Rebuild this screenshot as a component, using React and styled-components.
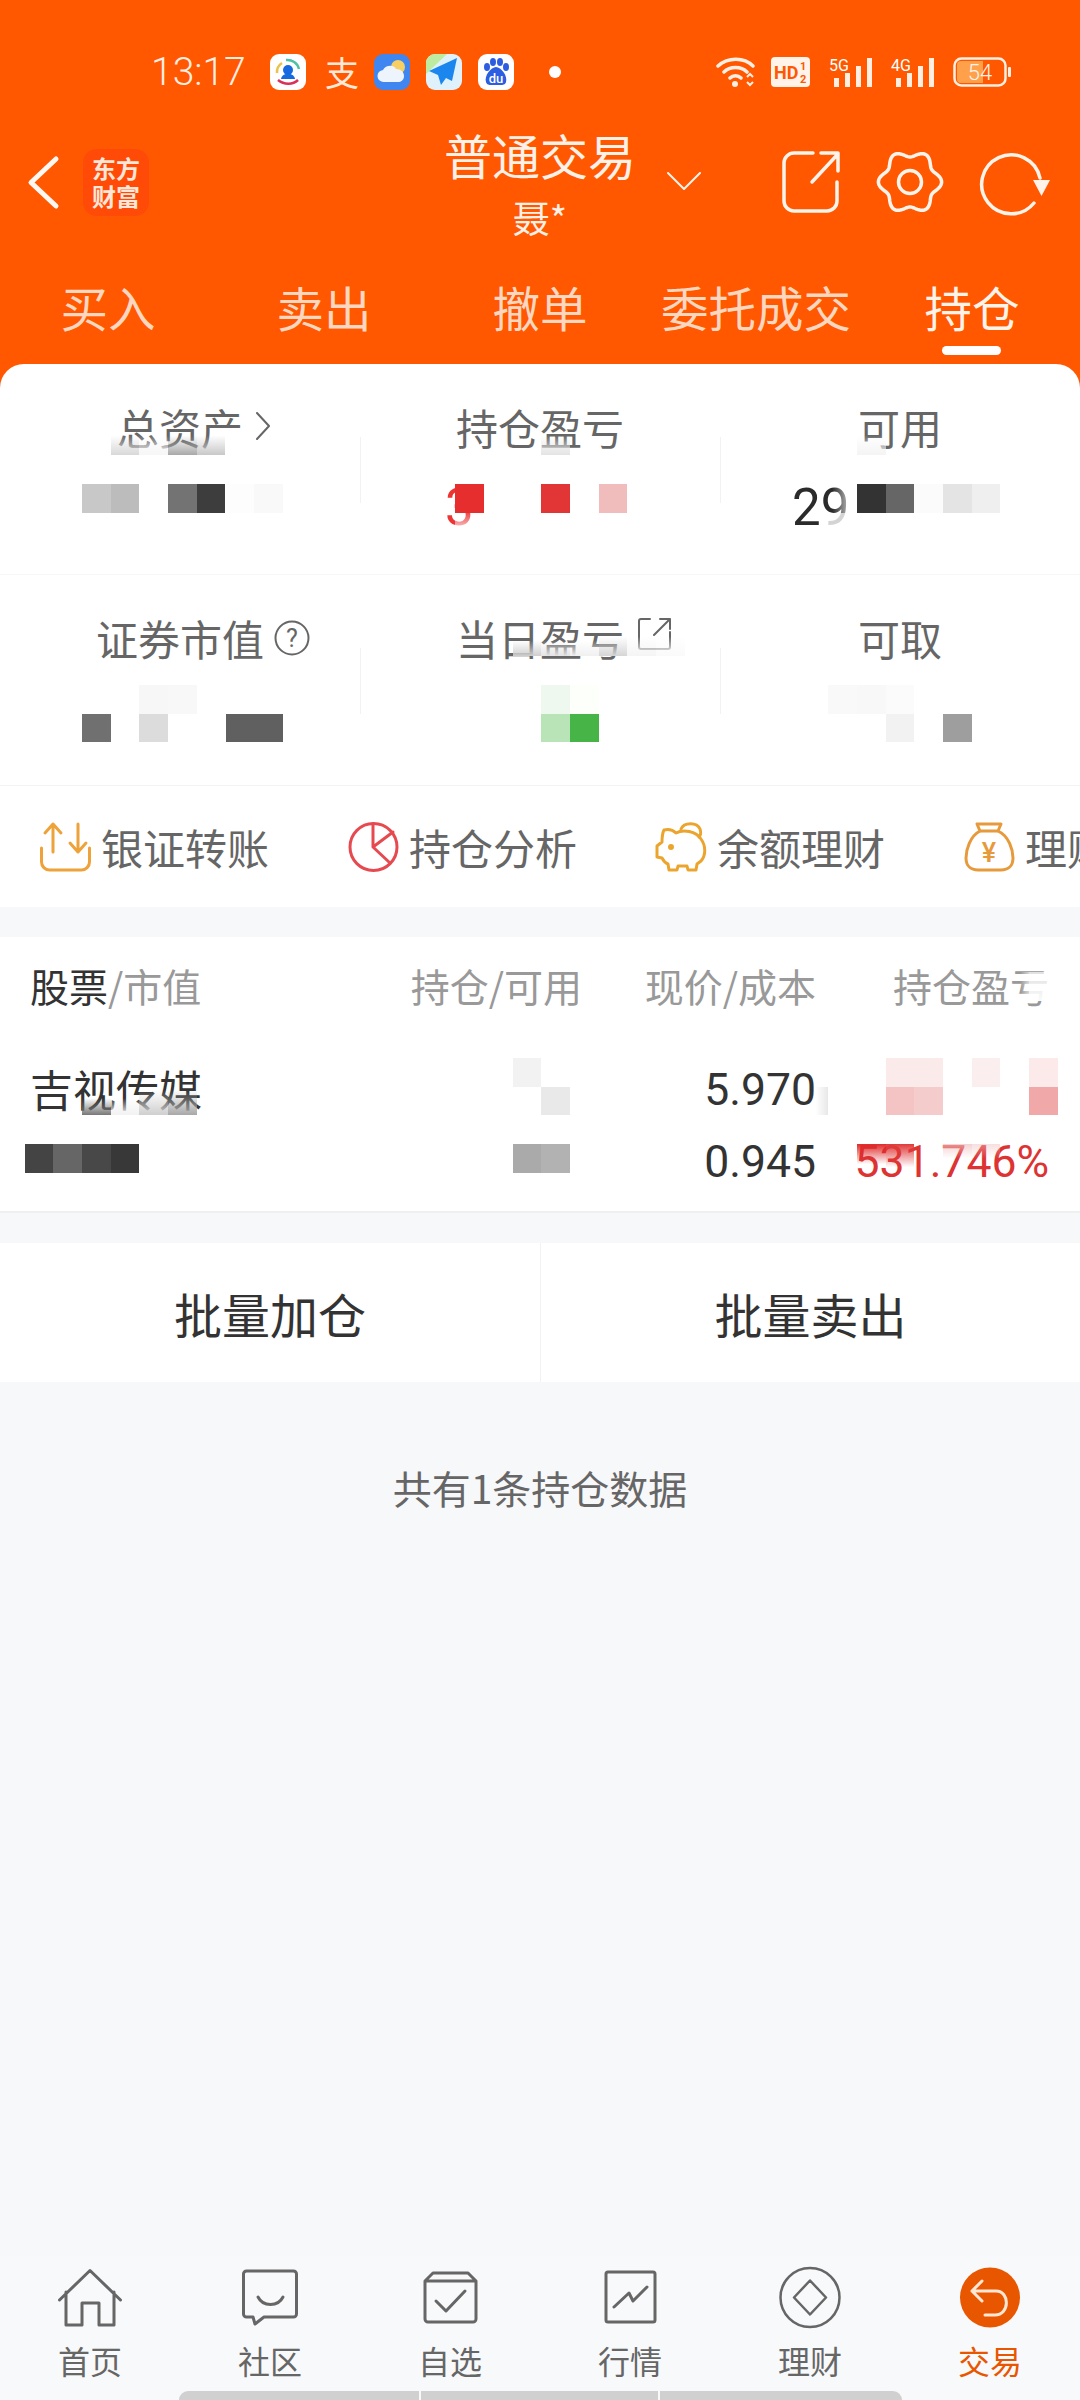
import React from "react";
import styled, { createGlobalStyle } from "styled-components";

const cjk = `"Noto Sans CJK SC", "Noto Sans", sans-serif`;
const num = `Roboto, "Noto Sans CJK SC", sans-serif`;

const Global = createGlobalStyle`
  html, body { margin: 0; padding: 0; background: #f7f8fa; }
  * { box-sizing: border-box; }
`;

const Page = styled.div`
  position: relative; width: 1080px; height: 2400px; overflow: hidden;
  display: flex; flex-direction: column; background: #f7f8fa; font-family: ${cjk};
`;
const Header = styled.header`
  height: 388px; background: #ff5800; color: #fff; flex-shrink: 0;
`;
const StatusBar = styled.div`
  height: 110px; padding: 34px 69px 0 151px; display: flex; align-items: center;
`;
const Time = styled.span`
  font: 300 39px/1 ${num}; color: #ffeee2; width: 119px; flex-shrink: 0;
`;
const AppIcons = styled.div`display: flex; align-items: center; gap: 16px;`;
const AppTile = styled.svg`width: 36px; height: 36px; display: block; flex-shrink: 0;`;
const Alipay = styled.span`
  font: 400 34px/36px ${cjk}; color: #ffe9da; width: 33px; text-align: center; margin-left: 3px;
`;
const Dot = styled.span`
  width: 12px; height: 12px; border-radius: 50%; background: #fff; margin-left: 19px;
`;
const SysIcons = styled.div`margin-left: auto; display: flex; align-items: center;`;
const SysIcon = styled.svg`display: block; flex-shrink: 0; margin-left: ${p => p.$ml || 0}px;`;

const Nav = styled.div`
  height: 144px; display: grid; grid-template-columns: 1fr auto 1fr; align-items: center;
`;
const NavLeft = styled.div`display: flex; align-items: center; gap: 25px; padding-left: 28px;`;
const Logo = styled.div`
  width: 66px; height: 67px; border-radius: 14px; background: #ff4a08; color: #ffe6d6;
  font: 700 24px/28px ${cjk}; display: flex; flex-direction: column; align-items: center; justify-content: center;
`;
const TitleBlock = styled.div`
  position: relative; display: flex; flex-direction: column; align-items: center; align-self: start; padding-top: 16px;
`;
const Title = styled.div`font: 400 48px/56px ${cjk}; color: #fff1e8;`;
const Sub = styled.div`font: 400 37px/44px ${cjk}; color: #fff1e8; margin-top: 13px;`;
const Caret = styled.svg`position: absolute; left: 223px; top: 62px;`;
const NavRight = styled.div`display: flex; justify-content: flex-end; align-items: center; padding-right: 30px; gap: 38px;`;
const Svg = styled.svg`display: block; flex-shrink: 0; overflow: visible;`;

const Tabs = styled.div`display: grid; grid-template-columns: repeat(5, 216px); height: 134px;`;
const Tab = styled.div`
  position: relative; text-align: center; padding-top: 23px;
  font: 400 47.500px/60px ${cjk};
  color: ${p => (p.$active ? "#fff3ea" : "#ffd6bf")};
  ${p => p.$active && `
    &::after {
      content: ""; position: absolute; left: 50%; top: 92px; width: 59px; height: 9px;
      margin-left: -30px; border-radius: 5px; background: #fff;
    }
  `}
`;

const Card = styled.section`
  position: relative; margin-top: -24px; background: #fff; border-radius: 24px 24px 0 0;
`;
const StatRow = styled.div`
  display: grid; grid-template-columns: repeat(3, 360px); height: 211px;
  border-bottom: 1px solid ${p => (p.$last ? "#f3f3f3" : "#f7f7f7")};
`;
const Stat = styled.div`
  position: relative; padding-top: 37px; text-align: center;
  ${p => p.$divided && `
    &::before {
      content: ""; position: absolute; left: 0; top: 73px; width: 1px; height: 66px; background: #f2f2f2;
    }
  `}
`;
const Label = styled.span`
  position: relative; display: inline-block; font: 400 42px/52px ${cjk}; color: #666;
`;
const LabelIcon = styled.svg`position: absolute; left: calc(100% + ${p => p.$gap}px); top: ${p => p.$top}px;`;
const Value = styled.div`
  margin-top: 27px; font: 400 51px/56px ${num}; text-align: left; padding-left: ${p => p.$pl || 0}px;
  color: ${p => p.$color || "#2b2b2b"}; height: 56px;
`;

const Actions = styled.div`display: flex; height: 121px; padding-left: 40px; overflow: hidden; background: #fff; align-items: center;`;
const Action = styled.div`
  flex: 0 0 308px; display: flex; align-items: center; gap: 10px;
  font: 400 42px/52px ${cjk}; color: #666; white-space: nowrap;
`;

const Table = styled.section`
  margin-top: 30px; background: #fff; padding: 0 31px 17px 30px; border-bottom: 2px solid #f0f0f0; height: 276px;
`;
const TableGrid = styled.div`
  display: grid; grid-template-columns: 300px 252px 234px 233px;
`;
const HeadCell = styled.div`
  height: 115px; padding-bottom: 19px; display: flex; align-items: center;
  justify-content: ${p => (p.$left ? "flex-start" : "flex-end")};
  font: 400 39px/50px ${cjk}; color: #999; white-space: nowrap;
`;
const Strong = styled.span`color: #333;`;
const Cell = styled.div`
  height: 72px; display: flex; align-items: center; padding-top: ${p => (p.$name ? 0 : 5)}px;
  justify-content: ${p => (p.$left ? "flex-start" : "flex-end")};
  font: 400 ${p => (p.$name ? 43 : 44.5)}px/1 ${p => (p.$name ? cjk : num)};
  color: ${p => p.$color || "#333"};
`;

const Buttons = styled.div`margin-top: 30px; height: 139px; display: grid; grid-template-columns: 1fr 1fr; background: #fff;`;
const BigButton = styled.div`
  display: flex; align-items: center; justify-content: center; font: 400 48px/1 ${cjk}; color: #333;
  ${p => p.$divided && "border-left: 1px solid #f2f2f2;"}
`;
const Note = styled.div`
  padding-top: 75px; text-align: center; font: 400 39px/60px ${cjk}; color: #666;
`;

const TabBar = styled.nav`
  margin-top: auto; height: 144px; display: flex; flex-direction: column; background: #f8f9fb;
`;
const TabItems = styled.div`display: grid; grid-template-columns: repeat(6, 180px); padding-top: 6px;`;
const TabItem = styled.div`
  display: flex; flex-direction: column; align-items: center;
  font: 400 32px/40px ${cjk}; color: ${p => (p.$active ? "#e85600" : "#666")};
`;
const TabIcon = styled.div`height: 70px; margin-bottom: 8px; display: flex; align-items: center; justify-content: center;`;
const HomeBar = styled.div`margin-top: auto; display: flex; justify-content: center; gap: 2px; height: 9px;`;
const HomeSeg = styled.span`
  width: ${p => p.$w}px; background: #d0d0d0; border-radius: ${p => p.$r || "0"};
`;

const Mosaic = styled.div`position: absolute; inset: 0; pointer-events: none;`;
const Block = styled.div`position: absolute; width: 28.7px; height: 28.7px;`;

const fade = (c, from = 30) => `linear-gradient(rgba(255,255,255,0) ${from}%, ${c})`;
const blocks = [
  [1, -2, fade("#d8d8d8")], [2, -2, fade("#f6f6f6")], [3, -2, fade("#a8a8a8")], [4, -2, fade("#c8c8c8")],
  [16, -2, fade("#e4e4e4")], [27, -2, fade("#f4f4f4")],
  [0, 0, "#c8c8c8"], [1, 0, "#bcbcbc"], [3, 0, "#737373"], [4, 0, "#3d3d3d"], [5, 0, "#fdfdfd"], [6, 0, "#f9f9f9"],
  [13, 0, "#e62e2e"], [16, 0, "#e23535"], [18, 0, "#f0bcbc"],
  [26, 0, "linear-gradient(90deg, rgba(255,255,255,0) 15%, #fff)"], [26, 1, "rgba(255,255,255,.8)"],
  [27, 0, "#333"], [28, 0, "#666"], [29, 0, "#fbfbfb"], [30, 0, "#e4e4e4"], [31, 0, "#efefef"],
  [13, 1, "linear-gradient(rgba(255,255,255,.1), #fff 80%)"],
  [15, 5, fade("#cfcfcf", 45)], [16, 5, fade("#e4e4e4", 45)], [17, 5, fade("#f0f0f0", 45)], [18, 5, fade("#d6d6d6", 30)],
  [19, 5, fade("#f5f5f5", 30)], [20, 5, fade("#fafafa", 30)],
  [2, 7, "#f7f7f7"], [3, 7, "#f8f8f8"], [16, 7, "#eef8ee"], [17, 7, "#fdfffa"],
  [26, 7, "#f9f9f9"], [27, 7, "#f8f8f8"], [28, 7, "#fbfbfb"],
  [0, 8, "#707070"], [2, 8, "#dcdcdc"], [5, 8, "#606060"], [6, 8, "#606060"],
  [16, 8, "#b8e4b8"], [17, 8, "#46b446"], [28, 8, "#f2f2f2"], [30, 8, "#9e9e9e"],
  [33, 17, "linear-gradient(rgba(255,255,255,.7), rgba(255,255,255,.95))"],
  [32, 17, "linear-gradient(90deg, rgba(255,255,255,0) 70%, rgba(255,255,255,.6))"],
  [15, 20, "#f2f2f2"], [28, 20, "#fbeaea"], [29, 20, "#fbeaea"], [31, 20, "#fbeeee"], [33, 20, "#fceaea"],
  [0, 21, fade("#777", 40)], [1, 21, fade("#f2f2f2", 40)], [2, 21, fade("#cfcfcf", 10)], [3, 21, fade("#a8a8a8", 10)],
  [16, 21, "#e9e9e9"], [25, 21, "linear-gradient(90deg, rgba(255,255,255,0) 55%, #e8e8e8)"],
  [28, 21, "#f4c4c4"], [29, 21, "#f5cccc"], [33, 21, "#f0a8a8"],
  [-2, 23, "#444"], [-1, 23, "#666"], [0, 23, "#484848"], [1, 23, "#383838"], [15, 23, "#aaa"], [16, 23, "#b2b2b2"],
  [27, 23, "linear-gradient(#e02a2a, rgba(224,42,42,0) 70%)"], [28, 23, "linear-gradient(#e03a3a, rgba(224,58,58,0) 80%)"],
  [30, 23, "linear-gradient(rgba(240,190,190,.7), rgba(255,255,255,0) 50%)"], [31, 23, "linear-gradient(rgba(240,190,190,.5), rgba(255,255,255,0) 50%)"],
];

const gearPath = (() => {
  const pts = [];
  for (let i = 0; i < 144; i++) {
    const t = (i / 144) * Math.PI * 2;
    const r = 28.3 + 3.3 * Math.cos(6 * t + Math.PI);
    pts.push(`${(33 + r * Math.sin(t)).toFixed(2)} ${(32 - r * Math.cos(t)).toFixed(2)}`);
  }
  return `M${pts.join("L")}Z`;
})();

const stroke = { fill: "none", stroke: "currentColor", strokeLinecap: "round", strokeLinejoin: "round" };

function Bars({ ml, label }) {
  return (
    <SysIcon $ml={ml} width="44" height="30" viewBox="0 0 44 30">
      <text x="0" y="14" fontFamily="Roboto, sans-serif" fontSize="16" fontWeight="400" fill="#fff">{label}</text>
      <g fill="#ffeee2">
        <rect x="5" y="21" width="5" height="9" />
        <rect x="16" y="16" width="5" height="14" />
        <rect x="27" y="9" width="5" height="21" />
        <rect x="38" y="1" width="5" height="29" />
      </g>
    </SysIcon>
  );
}

const tabIcons = [
  <Svg width="64" height="57" viewBox="0 0 64 57" key="h" {...stroke} strokeWidth="3" color="#666">
    <path d="M1.500 31 32 1.500 62.500 31M8 23v33h16V34h17v22h15V23" />
  </Svg>,
  <Svg width="56" height="56" viewBox="0 0 56 56" key="b" {...stroke} strokeWidth="3" color="#666">
    <path d="M4.500 2h47a3 3 0 0 1 3 3v40a3 3 0 0 1-3 3H22l-9 7-2-7H4.500a3 3 0 0 1-3-3V5a3 3 0 0 1 3-3z" />
    <path d="M16 28c5 10 20 10 25 0" />
  </Svg>,
  <Svg width="55" height="53" viewBox="0 0 55 53" key="c" {...stroke} strokeWidth="3" color="#666">
    <path d="M2 10l8-8h35l8 8v38a3 3 0 0 1-3 3H5a3 3 0 0 1-3-3zM2 10h51" />
    <path d="m13 30 10 10 19-20" />
  </Svg>,
  <Svg width="53" height="54" viewBox="0 0 53 54" key="d" {...stroke} strokeWidth="3" color="#666">
    <path d="M4 2h45a2 2 0 0 1 2 2v46a2 2 0 0 1-2 2H4a2 2 0 0 1-2-2V4a2 2 0 0 1 2-2z" />
    <path d="m10 37 15-14 4 8 14-14" />
  </Svg>,
  <Svg width="62" height="63" viewBox="0 0 62 63" key="e" {...stroke} strokeWidth="2.500" color="#666">
    <circle cx="31" cy="31.500" r="29.500" />
    <path d="M31 14.500 47 31.500 31 48.500 15 31.500z" />
  </Svg>,
  <Svg width="62" height="63" viewBox="0 0 62 63" key="f">
    <circle cx="31" cy="31.500" r="30" fill="#e85600" />
    <path d="M23 15 13 25l10 10M13 25h24c14 0 14 24-1 24H26" fill="none" stroke="#ffe7d6" strokeWidth="3" strokeLinecap="round" strokeLinejoin="round" />
  </Svg>,
];
const tabLabels = ["首页", "社区", "自选", "行情", "理财", "交易"];

export default function App() {
  return (
    <Page>
      <Global />
      <Header>
        <StatusBar>
          <Time>13:17</Time>
          <AppIcons>
            <AppTile viewBox="0 0 36 36">
              <rect width="36" height="36" rx="9" fill="#fff" />
              <path d="M7 19a11 11 0 0 1 5-10" fill="none" stroke="#e9c44c" strokeWidth="2.500" />
              <path d="M16 6a12 12 0 0 1 13 9" fill="none" stroke="#4fc3a1" strokeWidth="2.500" />
              <path d="M8 26c6 5 15 5 20 0" fill="none" stroke="#d8315b" strokeWidth="2.500" />
              <circle cx="18" cy="16" r="5" fill="#1769e0" />
              <path d="M11 25c1-7 13-7 14 0z" fill="#1769e0" />
            </AppTile>
            <Alipay>支</Alipay>
            <AppTile viewBox="0 0 36 36">
              <rect width="36" height="36" rx="9" fill="#3f86f0" />
              <circle cx="24" cy="13" r="7" fill="#f8cf62" />
              <path d="M10 28a6 6 0 0 1-1-12c2-5 11-6 13-1 5 0 8 3 8 7s-3 6-6 6z" fill="#eef4fb" />
            </AppTile>
            <AppTile viewBox="0 0 36 36">
              <rect width="36" height="36" rx="9" fill="#dff1fb" />
              <path d="M0 9a9 9 0 0 1 9-9h12L0 20z" fill="#bdeba0" />
              <path d="M31 4 3 17l9 4 3 10 5-7 6 3z" fill="#1a86ee" />
            </AppTile>
            <AppTile viewBox="0 0 36 36">
              <rect width="36" height="36" rx="9" fill="#fff" />
              <g fill="#2d5de0">
                <ellipse cx="9" cy="13" rx="3" ry="4" />
                <ellipse cx="15" cy="8" rx="3" ry="4" />
                <ellipse cx="22" cy="8" rx="3" ry="4" />
                <ellipse cx="28" cy="13" rx="3" ry="4" />
                <path d="M18 13c5 0 12 9 10 15-1 4-6 3-10 3s-9 1-10-3c-2-6 5-15 10-15z" />
              </g>
              <text x="18" y="29" textAnchor="middle" fontFamily="Roboto, sans-serif" fontSize="13" fontWeight="500" fill="#fff">du</text>
            </AppTile>
            <Dot />
          </AppIcons>
          <SysIcons>
            <SysIcon width="40" height="30" viewBox="0 0 40 30">
              <path d="M2 9c10-9 26-9 35 0M8 15c6-6 17-6 23 0M14 21c3-3 8-3 11 0" fill="none" stroke="#ffeee2" strokeWidth="3.500" strokeLinecap="round" />
              <circle cx="19" cy="27" r="3" fill="#ffeee2" />
              <path d="m31 20 3-3 3 3M31 25l3 3 3-3" fill="none" stroke="#ffeee2" strokeWidth="2" />
            </SysIcon>
            <SysIcon $ml={15} width="39" height="30" viewBox="0 0 39 30">
              <rect width="39" height="30" rx="4" fill="#fff3ea" />
              <text x="3" y="22" fontFamily="Roboto, sans-serif" fontSize="18" fontWeight="700" fill="#ff5800">HD</text>
              <text x="29" y="13" fontFamily="Roboto, sans-serif" fontSize="11" fontWeight="700" fill="#ff5800">1</text>
              <text x="29" y="26" fontFamily="Roboto, sans-serif" fontSize="11" fontWeight="700" fill="#ff5800">2</text>
            </SysIcon>
            <Bars ml={19} label="5G" />
            <Bars ml={18} label="4G" />
            <SysIcon $ml={18} width="58" height="30" viewBox="0 0 58 30">
              <rect x="1.500" y="1.500" width="51" height="27" rx="7" fill="none" stroke="#ffeee2" strokeWidth="2.500" />
              <path d="M4 8a4 4 0 0 1 4-4h22v22H8a4 4 0 0 1-4-4z" fill="#ffa04a" />
              <rect x="55" y="10" width="3" height="10" rx="1" fill="#ffeee2" />
              <text x="27" y="23" textAnchor="middle" fontFamily="Roboto, sans-serif" fontSize="22" fontWeight="300" fill="#fff3ea">54</text>
            </SysIcon>
          </SysIcons>
        </StatusBar>
        <Nav>
          <NavLeft>
            <Svg width="30" height="51" viewBox="0 0 30 51" {...stroke} strokeWidth="5" color="#fff8f2">
              <path d="M28 2 3 25.500 28 49" />
            </Svg>
            <Logo><span>东方</span><span>财富</span></Logo>
          </NavLeft>
          <TitleBlock>
            <Title>普通交易</Title>
            <Sub>聂*</Sub>
            <Caret width="34" height="18" viewBox="0 0 34 18" {...stroke} strokeWidth="2" color="#fff3ea">
              <path d="m1 1 16 16L33 1" />
            </Caret>
          </TitleBlock>
          <NavRight>
            <Svg width="57" height="62" viewBox="0 0 57 62" {...stroke} strokeWidth="3.500" color="#fff3ea">
              <path d="M31 2H12A10 10 0 0 0 2 12v38a10 10 0 0 0 10 10h33a10 10 0 0 0 10-10V31" />
              <path d="M30 31 56 3M39 2h17v18" />
            </Svg>
            <Svg width="66" height="64" viewBox="0 0 66 64" fill="none" stroke="#fff3ea" strokeWidth="3.500">
              <path d={gearPath} strokeLinejoin="round" />
              <circle cx="33" cy="32" r="11.500" />
            </Svg>
            <Svg width="69" height="62" viewBox="0 0 69 62">
              <path d="M53 52A29.500 29.500 0 1 1 59 27" fill="none" stroke="#fff3ea" strokeWidth="3.500" strokeLinecap="round" />
              <path d="M52 29h17l-8.500 16z" fill="#fff3ea" />
            </Svg>
          </NavRight>
        </Nav>
        <Tabs>
          <Tab>买入</Tab>
          <Tab>卖出</Tab>
          <Tab>撤单</Tab>
          <Tab>委托成交</Tab>
          <Tab $active>持仓</Tab>
        </Tabs>
      </Header>

      <Card>
        <StatRow>
          <Stat>
            <Label>
              总资产
              <LabelIcon $gap={13} $top={11} width="14" height="28" viewBox="0 0 14 28" {...stroke} strokeWidth="2" color="#666">
                <path d="m1 1 12 13L1 27" />
              </LabelIcon>
            </Label>
            <Value />
          </Stat>
          <Stat $divided>
            <Label>持仓盈亏</Label>
            <Value $pl={85} $color="#e33">3</Value>
          </Stat>
          <Stat $divided>
            <Label>可用</Label>
            <Value $pl={72}>29</Value>
          </Stat>
        </StatRow>
        <StatRow $last>
          <Stat>
            <Label>
              证券市值
              <LabelIcon $gap={10} $top={8} width="36" height="36" viewBox="0 0 36 36">
                <circle cx="18" cy="18" r="16.500" fill="none" stroke="#666" strokeWidth="2" />
                <text x="18" y="27" textAnchor="middle" fontFamily="Roboto, sans-serif" fontSize="25" fill="#666">?</text>
              </LabelIcon>
            </Label>
            <Value />
          </Stat>
          <Stat $divided>
            <Label>
              当日盈亏
              <LabelIcon $gap={14} $top={6} width="33" height="32" viewBox="0 0 33 32" {...stroke} strokeWidth="2" color="#666">
                <path d="M12 1H3a2 2 0 0 0-2 2v26a2 2 0 0 0 2 2h27a2 2 0 0 0 2-2V14" />
                <path d="M16 17 32 1M22 1h10v10" />
              </LabelIcon>
            </Label>
            <Value />
          </Stat>
          <Stat $divided>
            <Label>可取</Label>
            <Value />
          </Stat>
        </StatRow>
        <Actions>
          <Action>
            <Svg width="51" height="50" viewBox="0 0 51 50" {...stroke} strokeWidth="3" color="#eda23a">
              <path d="M1.500 26v14a8 8 0 0 0 8 8h32a8 8 0 0 0 8-8V26" />
              <path d="M13 30V2M5 11l8-9 8 9M38 2v28M30 21l8 9 8-9" />
            </Svg>
            银证转账
          </Action>
          <Action>
            <Svg width="51" height="50" viewBox="0 0 51 50" {...stroke} strokeWidth="3" color="#e64a50">
              <circle cx="25.500" cy="25" r="23.500" />
              <path d="M25 2v23l20-15M25 25l17 16" />
            </Svg>
            持仓分析
          </Action>
          <Action>
            <Svg width="51" height="50" viewBox="0 0 51 50" {...stroke} strokeWidth="3" color="#eba52e">
              <path d="M8 8c4-1 9 0 12 3 7-4 20-2 25 6 5 7 5 16 0 22l-4 3-1 6h-8l-1-4h-9l-1 4h-8l-1-6c-3-1-5-4-6-6l-5-1V24l5-4c0-4 0-8 2-12z" />
              <path d="M25 7c3-7 16-7 19 0 1 3 1 6-1 8" />
              <circle cx="15" cy="25" r="1.500" fill="#eba52e" />
            </Svg>
            余额理财
          </Action>
          <Action>
            <Svg width="51" height="50" viewBox="0 0 51 50">
              <g fill="none" stroke="#e79a3c" strokeWidth="3" strokeLinejoin="round">
                <path d="M13 2h24l-3 7H16z" />
                <path d="M16 9C6 14 2 28 2 36c0 8 5 12 12 12h23c7 0 12-4 12-12 0-8-4-22-15-27" />
              </g>
              <text x="25" y="40" textAnchor="middle" fontFamily="Roboto, sans-serif" fontSize="27" fontWeight="500" fill="#e79a3c">¥</text>
            </Svg>
            理财产品
          </Action>
        </Actions>
      </Card>

      <Table>
        <TableGrid>
          <HeadCell $left><Strong>股票</Strong>/市值</HeadCell>
          <HeadCell>持仓/可用</HeadCell>
          <HeadCell>现价/成本</HeadCell>
          <HeadCell>持仓盈亏</HeadCell>
          <Cell $left $name>吉视传媒</Cell>
          <Cell />
          <Cell>5.970</Cell>
          <Cell />
          <Cell $left />
          <Cell />
          <Cell>0.945</Cell>
          <Cell $color="#dd3333">531.746%</Cell>
        </TableGrid>
      </Table>

      <Buttons>
        <BigButton>批量加仓</BigButton>
        <BigButton $divided>批量卖出</BigButton>
      </Buttons>
      <Note>共有1条持仓数据</Note>

      <TabBar>
        <TabItems>
          {tabLabels.map((label, i) => (
            <TabItem key={label} $active={i === 5}>
              <TabIcon>{tabIcons[i]}</TabIcon>
              {label}
            </TabItem>
          ))}
        </TabItems>
        <HomeBar>
          <HomeSeg $w={240} $r="9px 0 0 0" />
          <HomeSeg $w={237} />
          <HomeSeg $w={242} $r="0 9px 0 0" />
        </HomeBar>
      </TabBar>

      <Mosaic>
        {blocks.map(([c, r, bg]) => (
          <Block key={`${c}-${r}`} style={{ left: 82 + c * 28.7, top: 484 + r * 28.7, background: bg }} />
        ))}
      </Mosaic>
    </Page>
  );
}
